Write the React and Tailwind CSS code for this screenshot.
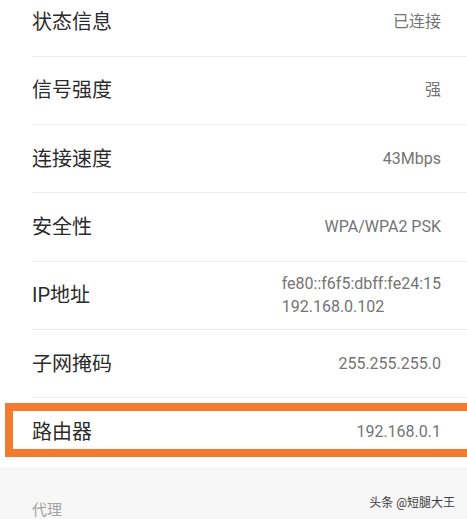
import React from 'react'

const rows = [
  { label: '状态信息', value: '已连接' },
  { label: '信号强度', value: '强' },
  { label: '连接速度', value: '43Mbps' },
  { label: '安全性', value: 'WPA/WPA2 PSK' },
  { label: 'IP地址', value: ['fe80::f6f5:dbff:fe24:15', '192.168.0.102'] },
  { label: '子网掩码', value: '255.255.255.0' },
]

const font = { fontFamily: 'Roboto, "Noto Sans CJK SC", sans-serif' }

const Row = ({ label, value, last }) => (
  <div className="pl-8">
    <div
      className={`flex h-[68.3px] items-center justify-between pr-[26px] ${last ? '' : 'border-b border-[#ececec]'}`}
    >
      <span className="text-[20px] leading-none text-[#2b2b2b]">{label}</span>
      {Array.isArray(value) ? (
        <div className="text-left text-[16px] leading-[23px] text-[#747474]">
          {value.map(v => (
            <div key={v}>{v}</div>
          ))}
        </div>
      ) : (
        <span className="text-[16px] leading-none text-[#747474]">{value}</span>
      )}
    </div>
  </div>
)

export default function App() {
  return (
    <div className="relative h-[519px] w-[467px] overflow-hidden bg-white" style={font}>
      <div className="-mt-[11.5px]">
        {rows.map(r => (
          <Row key={r.label} label={r.label} value={r.value} />
        ))}
        <div className="relative">
          <Row label="路由器" value="192.168.0.1" last />
          <div className="absolute left-[5px] top-[5px] h-[54px] w-[470px] border-8 border-[#f47a30]" />
        </div>
      </div>
      <div className="h-[60px] bg-[#f7f7f7] pl-8 pt-[31px]">
        <span className="text-[15px] leading-[20px] text-[#a3a3a3]">代理</span>
      </div>
      <div className="absolute right-[12px] top-[497px] text-[12px] leading-none text-[#3a3a3a]">
        头条 @短腿大王
      </div>
    </div>
  )
}
